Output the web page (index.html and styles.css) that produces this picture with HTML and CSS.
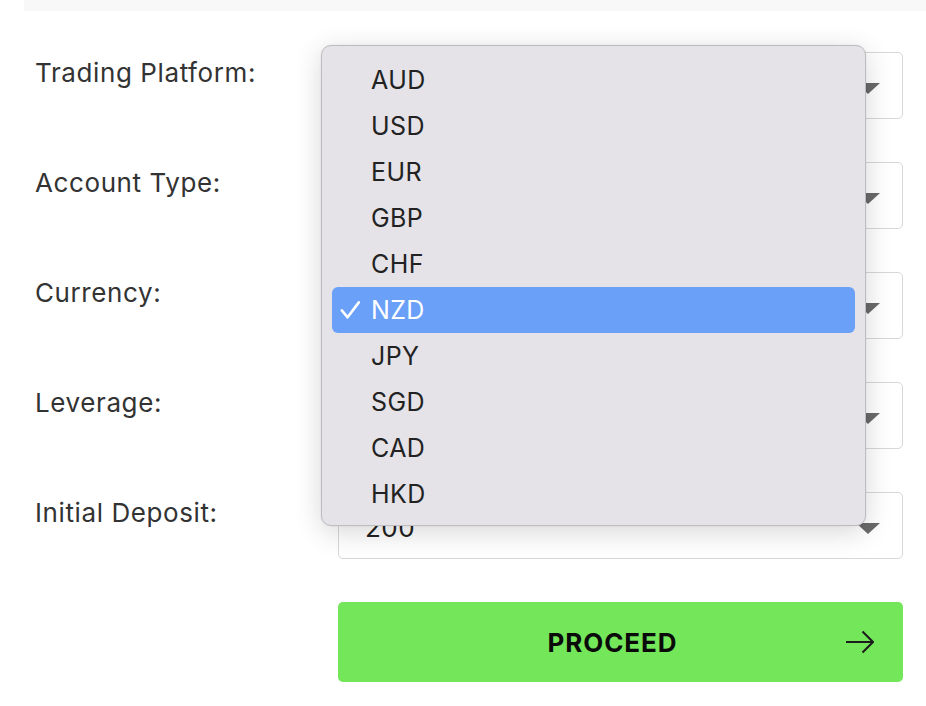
FILE: index.html
```html
<!DOCTYPE html>
<html lang="en">
<head>
<meta charset="utf-8">
<title>Open Account</title>
<link rel="stylesheet" href="styles.css">
</head>
<body>
<div class="strip"></div>
<div class="form">
  <div class="label">Trading Platform:</div>
  <div class="select"><span class="value"></span><span class="caret"></span></div>

  <div class="label">Account Type:</div>
  <div class="select"><span class="value"></span><span class="caret"></span></div>

  <div class="label">Currency:</div>
  <div class="select"><span class="value"></span><span class="caret"></span></div>

  <div class="label">Leverage:</div>
  <div class="select"><span class="value"></span><span class="caret"></span></div>

  <div class="label">Initial Deposit:</div>
  <div class="select"><span class="value">200</span><span class="caret"></span></div>

  <div class="spacer"></div>
  <button class="proceed" type="button">
    <span class="proceed-text">PROCEED</span>
    <svg class="proceed-arrow" width="28" height="24" viewBox="0 0 28 24" aria-hidden="true">
      <path d="M0 12 H26.5 M16.5 1.5 L27 12 L16.5 22.5" fill="none" stroke="#1c1c1c" stroke-width="2"/>
    </svg>
  </button>
</div>

<ul class="menu">
  <li class="item"><span class="check"></span><span>AUD</span></li>
  <li class="item"><span class="check"></span><span>USD</span></li>
  <li class="item"><span class="check"></span><span>EUR</span></li>
  <li class="item"><span class="check"></span><span>GBP</span></li>
  <li class="item"><span class="check"></span><span>CHF</span></li>
  <li class="item selected"><span class="check"><svg width="20" height="18" viewBox="0 0 20 18" aria-hidden="true"><path d="M1.8 9.4 L7.6 16.3 L18.8 1.4" fill="none" stroke="#ffffff" stroke-width="2.6" stroke-linecap="round" stroke-linejoin="round"/></svg></span><span>NZD</span></li>
  <li class="item"><span class="check"></span><span>JPY</span></li>
  <li class="item"><span class="check"></span><span>SGD</span></li>
  <li class="item"><span class="check"></span><span>CAD</span></li>
  <li class="item"><span class="check"></span><span>HKD</span></li>
</ul>
</body>
</html>
```

FILE: styles.css
```css
html, body {
  margin: 0;
  padding: 0;
  background: #ffffff;
}

body {
  font-family: Inter, "Liberation Sans", Arial, sans-serif;
  color: #333333;
  position: relative;
  width: 926px;
  height: 706px;
  overflow: hidden;
}

.strip {
  height: 11px;
  margin-left: 24px;
  background: #f8f8f8;
}

.form {
  display: grid;
  grid-template-columns: 303px 565px;
  grid-auto-rows: 67px;
  row-gap: 43px;
  padding-left: 35px;
  margin-top: 41px;
}

.label {
  font-size: 26px;
  line-height: 32px;
  padding-top: 5px;
  letter-spacing: 0.6px;
  color: #333333;
  white-space: nowrap;
}

.select {
  box-sizing: border-box;
  height: 67px;
  border: 1px solid #d7d7d7;
  border-radius: 5px;
  background: #ffffff;
  display: flex;
  align-items: center;
  justify-content: space-between;
  padding: 0 22px 0 26px;
  font-size: 26px;
  letter-spacing: 0.5px;
  color: #222222;
}

.value {
  padding-top: 3px;
}

.caret {
  width: 0;
  height: 0;
  border-left: 12px solid transparent;
  border-right: 12px solid transparent;
  border-top: 11px solid #6a6a6a;
  margin-top: 6px;
}

.spacer {
  height: 80px;
}

.proceed {
  box-sizing: border-box;
  height: 80px;
  border: none;
  border-radius: 5px;
  background: #73e65a;
  display: flex;
  align-items: center;
  padding: 0 29px 0 41px;
  font-family: Inter, "Liberation Sans", Arial, sans-serif;
  cursor: pointer;
}

.proceed-text {
  flex: 1;
  text-align: center;
  font-size: 26px;
  font-weight: 700;
  color: #0a0a0a;
  letter-spacing: 0.9px;
}

.proceed-arrow {
  display: block;
  flex: none;
}

.menu {
  position: absolute;
  left: 321px;
  top: 45px;
  width: 545px;
  height: 481px;
  box-sizing: border-box;
  margin: 0;
  padding: 11px 0 8px;
  list-style: none;
  background: #e5e3e8;
  border: 1px solid #bdbcc0;
  border-radius: 10px;
  box-shadow: 0 6px 28px rgba(0, 0, 0, 0.16), 0 0 2px rgba(0, 0, 0, 0.08);
}

.item {
  height: 46px;
  margin: 0 10px;
  padding-left: 8px;
  display: grid;
  grid-template-columns: 31px auto;
  align-items: center;
  justify-content: start;
  border-radius: 6px;
  font-size: 25px;
  letter-spacing: 0.4px;
  color: #222222;
}

.item.selected {
  background: #6aa0f8;
  color: #ffffff;
}

.check {
  display: flex;
  align-items: center;
}

.check svg {
  display: block;
}
```
